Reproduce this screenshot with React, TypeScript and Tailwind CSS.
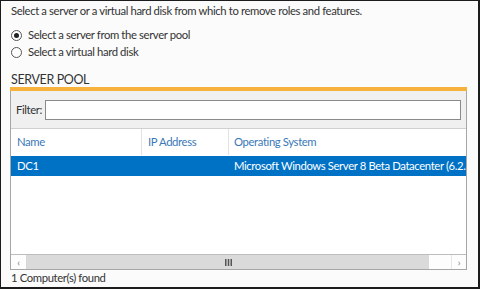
import React from "react";

export default function App() {
  const font = { fontFamily: 'Lato, "Noto Sans", sans-serif' };
  return (
    <div
      className="w-[480px] h-[289px] bg-[#fbfbfb] border-t border-l border-r-2 border-b-2 border-[#1c1c1c] text-[#333] text-[11.3px] tracking-[-0.38px] leading-none overflow-hidden flex flex-col"
      style={font}
    >
      <div className="pl-[10px] pt-[4px] h-[13px]">Select a server or a virtual hard disk from which to remove roles and features.</div>
      <div className="flex flex-col pl-[10px] mt-[15px] gap-[5px]">
        <div className="flex items-center gap-[6px] h-[12px]">
          <span className="w-[11px] h-[11px] rounded-full border border-[#555] bg-white flex items-center justify-center">
            <span className="w-[5px] h-[5px] rounded-full bg-[#222]" />
          </span>
          <span>Select a server from the server pool</span>
        </div>
        <div className="flex items-center gap-[6px] h-[12px]">
          <span className="w-[11px] h-[11px] rounded-full border border-[#555] bg-white" />
          <span>Select a virtual hard disk</span>
        </div>
      </div>
      <div className="pl-[10px] mt-[16px] text-[12.5px] text-[#333] h-[13px]">SERVER POOL</div>
      <div className="ml-[9px] w-[457px] mt-[0px] h-[183px] border-x border-b border-[#a6a6a6] flex flex-col bg-white">
        <div className="h-[4px] bg-[#f7b23e] -mx-px" />
        <div className="h-[38px] bg-[#f0f0f0] border-b border-[#d0d0d0] flex items-center pl-[5px] pr-[5px] gap-[3px]">
          <span>Filter:</span>
          <div className="flex-1 h-[20px] bg-white border border-[#8a8a8a]" />
        </div>
        <div className="h-[27px] flex items-center text-[#3a78b8] border-b border-white">
          <div className="w-[131px] h-full flex items-center pl-[6px] border-r border-[#e2e2e2]">Name</div>
          <div className="w-[87px] h-full flex items-center pl-[6px] border-r border-[#e2e2e2]">IP Address</div>
          <div className="flex-1 h-full flex items-center pl-[5px]">Operating System</div>
        </div>
        <div className="h-[20px] bg-[#0072c6] text-white flex items-center whitespace-nowrap overflow-hidden">
          <div className="w-[131px] pl-[6px] shrink-0">DC1</div>
          <div className="w-[87px] shrink-0" />
          <div className="pl-[5px] shrink-0">Microsoft Windows Server 8 Beta Datacenter (6.2.8</div>
        </div>
        <div className="flex-1" />
        <div className="h-[15px] flex border-t border-[#bdbdbd] bg-[#fdfdfd]">
          <div className="w-[16px] flex items-center justify-center text-[#777] text-[10px] border-r border-[#d6d6d6]">‹</div>
          <div className="w-[402px] bg-[#dadada] flex items-center justify-center">
            <svg width="7" height="7" viewBox="0 0 7 7">
              <rect x="0" y="0" width="1.5" height="7" fill="#555" />
              <rect x="2.75" y="0" width="1.5" height="7" fill="#555" />
              <rect x="5.5" y="0" width="1.5" height="7" fill="#555" />
            </svg>
          </div>
          <div className="flex-1 border-r border-[#e6e6e6]" />
          <div className="w-[14px] flex items-center justify-center text-[#777] text-[10px]">›</div>
        </div>
      </div>
      <div className="pl-[10px] mt-[2px]">1 Computer(s) found</div>
    </div>
  );
}
